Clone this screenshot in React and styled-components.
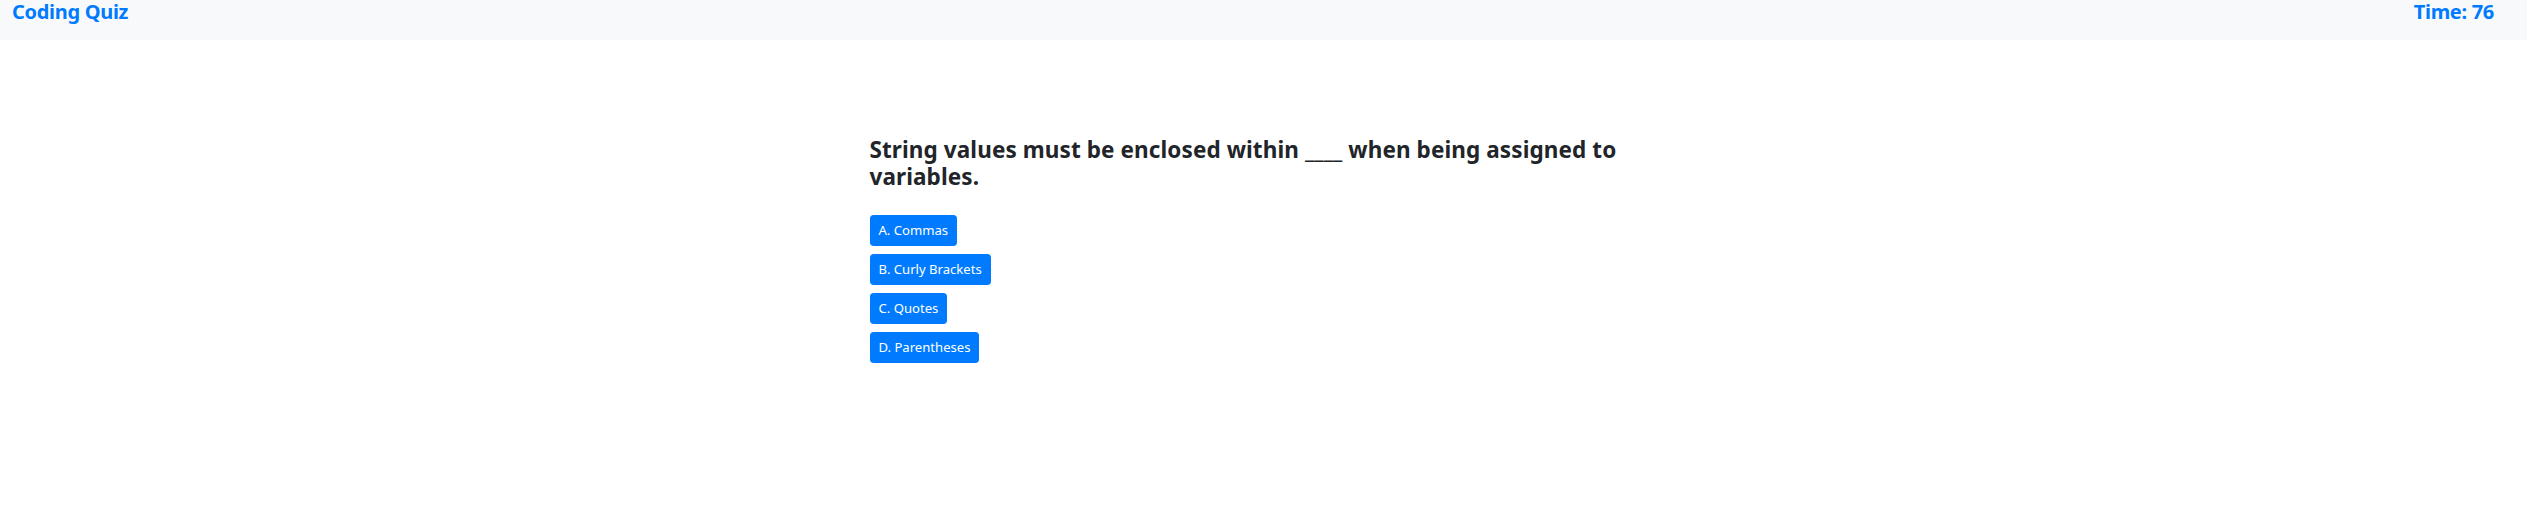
import React from 'react'
import styled, { createGlobalStyle } from 'styled-components'

const GlobalStyle = createGlobalStyle`
body {
  margin: 0;
  background: #fff;
  font-family: "Noto Sans", "Open Sans", Arial, sans-serif;
  color: #212529;
}
`

const Nav = styled.nav`
display: flex;
justify-content: space-between;
align-items: flex-start;
height: 40px;
margin-right: 14px;
padding: 0 33px 0 12px;
background-color: #f8f9fa;
`
const NavText = styled.span`
color: #007bff;
font-size: 20px;
font-weight: 700;
line-height: 24px;
letter-spacing: -0.3px;
`
const Main = styled.main`
width: 802px;
margin: 0 auto;
padding-top: 96px;
`
const Question = styled.h4`
margin: 0 0 24px;
font-size: 22.5px;
line-height: 27.3px;
font-weight: 700;
letter-spacing: 0.1px;
`
const Answers = styled.div`
display: flex;
flex-direction: column;
align-items: flex-start;
gap: 8px;
`
const AnswerButton = styled.button`
padding: 4px 8px;
font-family: inherit;
font-size: 13.1px;
line-height: 21px;
color: #fff;
background-color: #007bff;
border: 1px solid #007bff;
border-radius: 3.2px;
cursor: pointer;
`

const answers = ['A. Commas', 'B. Curly Brackets', 'C. Quotes', 'D. Parentheses']

const App = () => {
    const [time] = React.useState(76)
    return (
        <>
            <GlobalStyle />
            <Nav>
                <NavText>Coding Quiz</NavText>
                <NavText>Time: {time}</NavText>
            </Nav>
            <Main>
                <Question>String values must be enclosed within ____ when being assigned to variables.</Question>
                <Answers>
                    {answers.map((a) => <AnswerButton key={a}>{a}</AnswerButton>)}
                </Answers>
            </Main>
        </>
    )
}
export default App
